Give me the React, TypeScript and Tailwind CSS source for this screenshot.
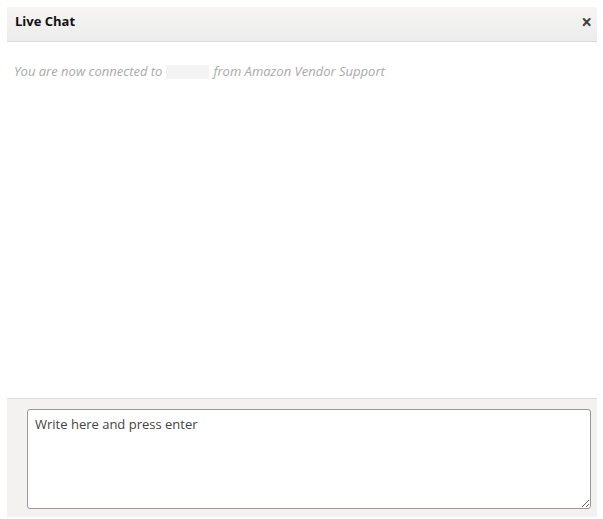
import React from 'react';

const App = () => {
  return (
    <div className="w-[603px] h-[519px] bg-white pt-[7px] px-[7px] font-['Open_Sans',sans-serif]">
      <div className="w-[590px] h-[510px] flex flex-col bg-white">
        <div className="h-[35px] flex items-center justify-between pl-[8px] pr-[5px] pb-[4px] border-b border-[#dcdcdc] bg-gradient-to-b from-[#f6f5f4] to-[#ececec]">
          <span className="text-[13px] font-bold text-[#111]">Live Chat</span>
          <span className="text-[#444] text-[19px] font-bold leading-none">×</span>
        </div>
        <div className="flex-1 px-[7px] pt-[20px]">
          <p className="text-[13px] italic text-[#a9a9a9] flex items-center">
            You are now connected to
            <span className="inline-block w-[43px] h-[14px] bg-[#f3f3f3] mx-[4px]"></span>
            from Amazon Vendor Support
          </p>
        </div>
        <div className="h-[119px] border-t border-[#dedede] bg-[#f3f2f1] pt-[10px] pl-[20px] pr-[6px]">
          <textarea
            className="w-full h-[100px] bg-white border border-[#999] rounded-[3px] px-[7px] py-[5px] text-[13px] text-[#444] placeholder:text-[#444] font-['Open_Sans',sans-serif] outline-none"
            placeholder="Write here and press enter"
          />
        </div>
      </div>
    </div>
  );
};

export default App;
